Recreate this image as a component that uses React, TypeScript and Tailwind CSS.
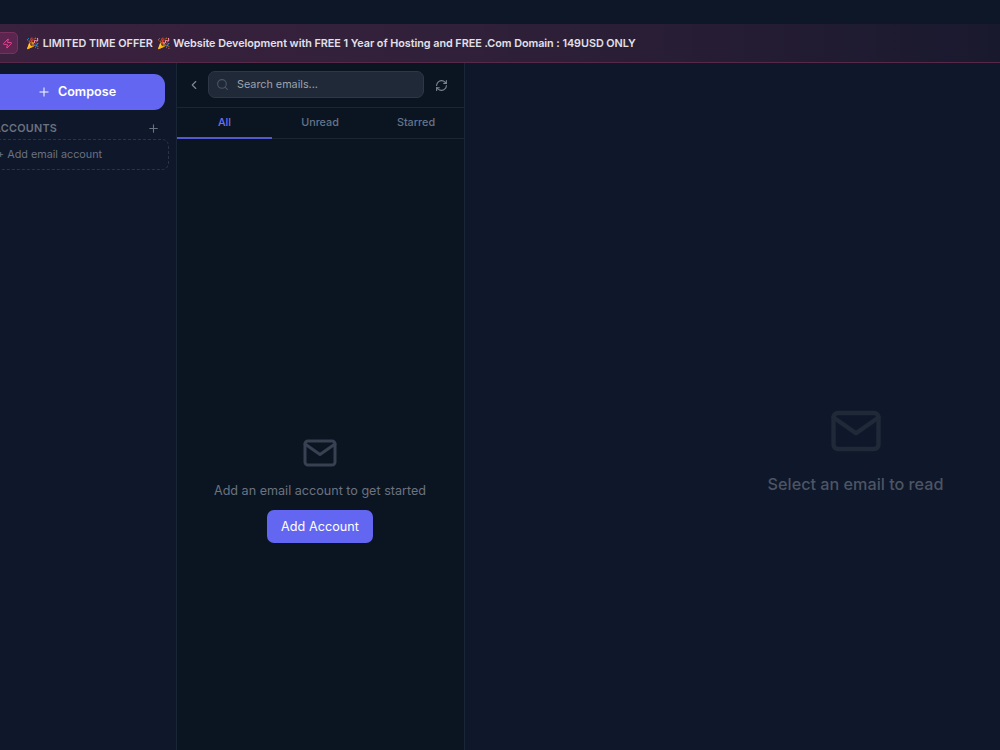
import React from 'react'
import { ChevronLeft, Plus, RefreshCw, Search, Zap } from 'lucide-react'
import { FiMail } from 'react-icons/fi'

const TABS = ['All', 'Unread', 'Starred']

function PromoBanner() {
  return (
    <div className="h-[39px] shrink-0 flex items-center border-b border-[#572848] bg-linear-to-r from-[#3a213e] via-[#31203a] via-45% to-[#19192e]">
      <div className="-ml-1 w-[22px] h-[22px] shrink-0 flex items-center justify-center rounded-[5px] border border-[#79305f] bg-[#5a2650]">
        <Zap size={11} className="text-[#ec4899]" />
      </div>
      <p className="ml-2 mt-0.5 text-[10.8px] font-semibold text-[#e2e1ea] whitespace-pre">
        🎉<span className="ml-px"> LIMITED TIME OFFER </span>
        <span className="mx-px">🎉</span>
        <span className="tracking-[-0.035px]"> Website Development with FREE 1 Year of Hosting and FREE .Com Domain : 149USD ONLY</span>
      </p>
    </div>
  )
}

function Sidebar() {
  return (
    <aside className="w-[198px] -ml-[21px] shrink-0 border-r border-[#1a2535] bg-[#0f172a]">
      <button className="mt-[10.5px] ml-[11px] w-[175px] h-[36px] pr-0.5 flex items-center justify-center gap-[7px] rounded-[11px] bg-[#6366f1] text-white text-[12.6px] font-semibold">
        <Plus size={14} strokeWidth={1.7} />
        <span className="pt-px">Compose</span>
      </button>
      <div className="mt-[11px] pl-[14px] pr-[16px] h-[15px] flex items-center justify-between text-[#6b7280]">
        <span className="mt-0.5 text-[10.8px] font-semibold tracking-[0.27px]">ACCOUNTS</span>
        <Plus size={13} />
      </div>
      <button className="mt-[3.5px] ml-[7px] w-[183px] h-[31px] flex items-center pl-[10px] pt-px rounded-[7px] border border-dashed border-[#293546] text-[10.8px] text-[#6b7280]">
        + Add email account
      </button>
    </aside>
  )
}

function EmailList() {
  return (
    <section className="w-[288px] shrink-0 flex flex-col border-r border-[#1a2535] bg-[#0b1521]">
      <div className="h-[45px] shrink-0 flex items-center border-b border-[#1b2635]">
        <ChevronLeft size={14} className="ml-[10px] text-[#7c8591]" />
        <div className="ml-[7px] w-[216px] h-[27px] -mt-px flex items-center rounded-[7px] border border-[#2c3847] bg-[#1f2937] pl-[7px]">
          <Search size={13} className="text-[#4b5563]" />
          <span className="ml-2 pt-0.5 text-[10.8px] text-[#9ca3af]">Search emails...</span>
        </div>
        <RefreshCw size={13} className="ml-[11px] text-[#7c8591]" />
      </div>
      <div className="h-[31px] shrink-0 flex border-b border-[#1b2635] text-[10.8px] font-medium">
        {TABS.map((tab, i) => (
          <button key={tab} className={i === 0 ? 'w-[95px] h-[31px] pt-0.5 border-b-2 border-[#5558d3] text-[#6d70f3]' : 'w-24 h-[30px] text-[#64748b]'}>
            {tab}
          </button>
        ))}
      </div>
      <div className="flex-1 flex flex-col items-center pt-[296px] pr-px">
        <FiMail size={36} className="text-[#374151]" />
        <p className="mt-[11px] text-[12.6px] leading-[18px] text-[#6b7280]">Add an email account to get started</p>
        <button className="mt-[10px] w-[106px] h-[33px] pt-px rounded-[7px] bg-[#6366f1] text-[12.6px] tracking-[0.07px] text-white">Add Account</button>
      </div>
    </section>
  )
}

export default function App() {
  return (
    <div className="w-[1000px] h-[750px] flex flex-col overflow-hidden bg-[#0d1728] font-['Inter',sans-serif]">
      <div className="h-6 shrink-0 bg-[#0d1728]" />
      <PromoBanner />
      <div className="flex-1 flex">
        <Sidebar />
        <EmailList />
        <main className="w-[781px] shrink-0 flex flex-col items-center bg-[#0f172a] pt-[341px]">
          <FiMail size={54} className="text-[#1f2937]" />
          <p className="mt-[14px] text-[16.2px] leading-[25px] font-medium text-[#4b5563]">Select an email to read</p>
        </main>
      </div>
    </div>
  )
}
